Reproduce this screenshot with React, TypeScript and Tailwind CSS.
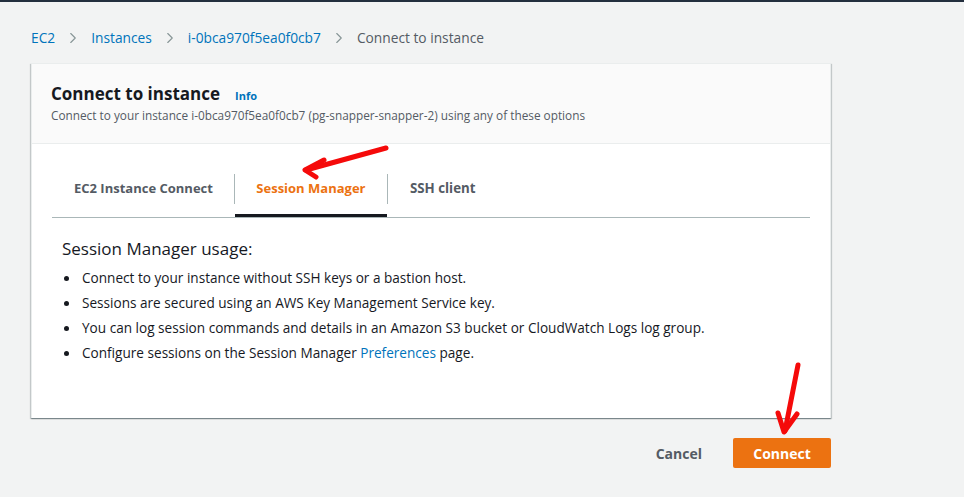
import { ChevronRight } from "lucide-react";

const font = { fontFamily: '"Open Sans", "Noto Sans", sans-serif' };

function Breadcrumbs() {
  const items = ["EC2", "Instances", "i-0bca970f5ea0f0cb7"];
  return (
    <div className="flex items-center h-[20px] text-[13.75px] mt-[26px] ml-[31px]">
      {items.map((item) => (
        <div key={item} className="flex items-center">
          <span className="text-[#0073bb]">{item}</span>
          <ChevronRight className="mx-[9px] text-[#879596]" size={18} strokeWidth={1.5} />
        </div>
      ))}
      <span className="text-[#545b64]">Connect to instance</span>
    </div>
  );
}

function Tabs() {
  return (
    <div className="mx-[20px] mt-[22px] flex border-b border-[#aab7b8] h-[52px] whitespace-nowrap text-[13px] font-bold">
      <div className="flex items-center pl-[22px] pr-[21px] pb-[6px] text-[#545b64]">EC2 Instance Connect</div>
      <div className="w-px h-[30px] mt-[8px] bg-[#aab7b8]" />
      <div className="flex items-center justify-center w-[152px] pb-[3px] text-[#ec7211] border-b-[3px] border-[#16191f]">Session Manager</div>
      <div className="w-px h-[30px] mt-[8px] bg-[#aab7b8]" />
      <div className="flex items-center px-[22px] pb-[6px] text-[13.3px] text-[#545b64]">SSH client</div>
    </div>
  );
}

export default function App() {
  const bullets = [
    "Connect to your instance without SSH keys or a bastion host.",
    "Sessions are secured using an AWS Key Management Service key.",
    "You can log session commands and details in an Amazon S3 bucket or CloudWatch Logs log group.",
  ];
  return (
    <div className="relative w-[964px] h-[497px] bg-[#f2f3f3] overflow-hidden" style={font}>
      <div className="h-[2px] bg-[#232f3e]" />
      <Breadcrumbs />
      <div className="ml-[31px] mt-[15px] w-[800px] h-[355px] bg-white border-x border-t border-[#eaeded] shadow-[0_1px_1px_0_rgba(0,28,36,0.3),1px_1px_1px_0_rgba(0,28,36,0.15),-1px_1px_1px_0_rgba(0,28,36,0.15)]">
        <div className="h-[80px] bg-[#fafafa] border-b border-[#eaeded] px-[19px] pt-[18px]">
          <div className="flex items-baseline">
            <span className="text-[17px] font-bold text-[#16191f] leading-[24px]">Connect to instance</span>
            <span className="ml-[15px] text-[11px] font-bold text-[#0073bb]">Info</span>
          </div>
          <div className="text-[11.8px] text-[#545b64] mt-[1px]">
            Connect to your instance i-0bca970f5ea0f0cb7 (pg-snapper-snapper-2) using any of these options
          </div>
        </div>
        <Tabs />
        <div className="px-[30px] pt-[19px]">
          <div className="text-[17px] text-[#16191f] leading-[24px]">Session Manager usage:</div>
          <ul className="mt-[5px] text-[13.6px] text-[#16191f]">
            {bullets.map((b) => (
              <li key={b} className="flex items-center h-[25px]">
                <span className="w-[5px] h-[5px] rounded-full bg-[#16191f] ml-[2px] mr-[13px]" />
                {b}
              </li>
            ))}
            <li className="flex items-center h-[25px]">
              <span className="w-[5px] h-[5px] rounded-full bg-[#16191f] ml-[2px] mr-[13px]" />
              Configure sessions on the Session Manager&nbsp;<span className="text-[#0073bb]">Preferences</span>&nbsp;page.
            </li>
          </ul>
        </div>
      </div>
      <div className="flex justify-end items-center w-[831px] mt-[20px] gap-[31px]">
        <span className="text-[14px] font-bold text-[#545b64]">Cancel</span>
        <button className="w-[98px] h-[30px] rounded-[2px] bg-[#ec7211] text-white text-[14px] font-bold">Connect</button>
      </div>
      <svg className="absolute left-0 top-0 pointer-events-none" width="964" height="497">
        <g stroke="#f50a0a" strokeWidth="5" strokeLinecap="round" strokeLinejoin="round" fill="none">
          <path d="M386 148 L306 170" />
          <path d="M324 160 L305 170 L316 177" />
          <path d="M798 365 L785 431" />
          <path d="M778 413 L784 432 L797 414" />
        </g>
      </svg>
    </div>
  );
}
